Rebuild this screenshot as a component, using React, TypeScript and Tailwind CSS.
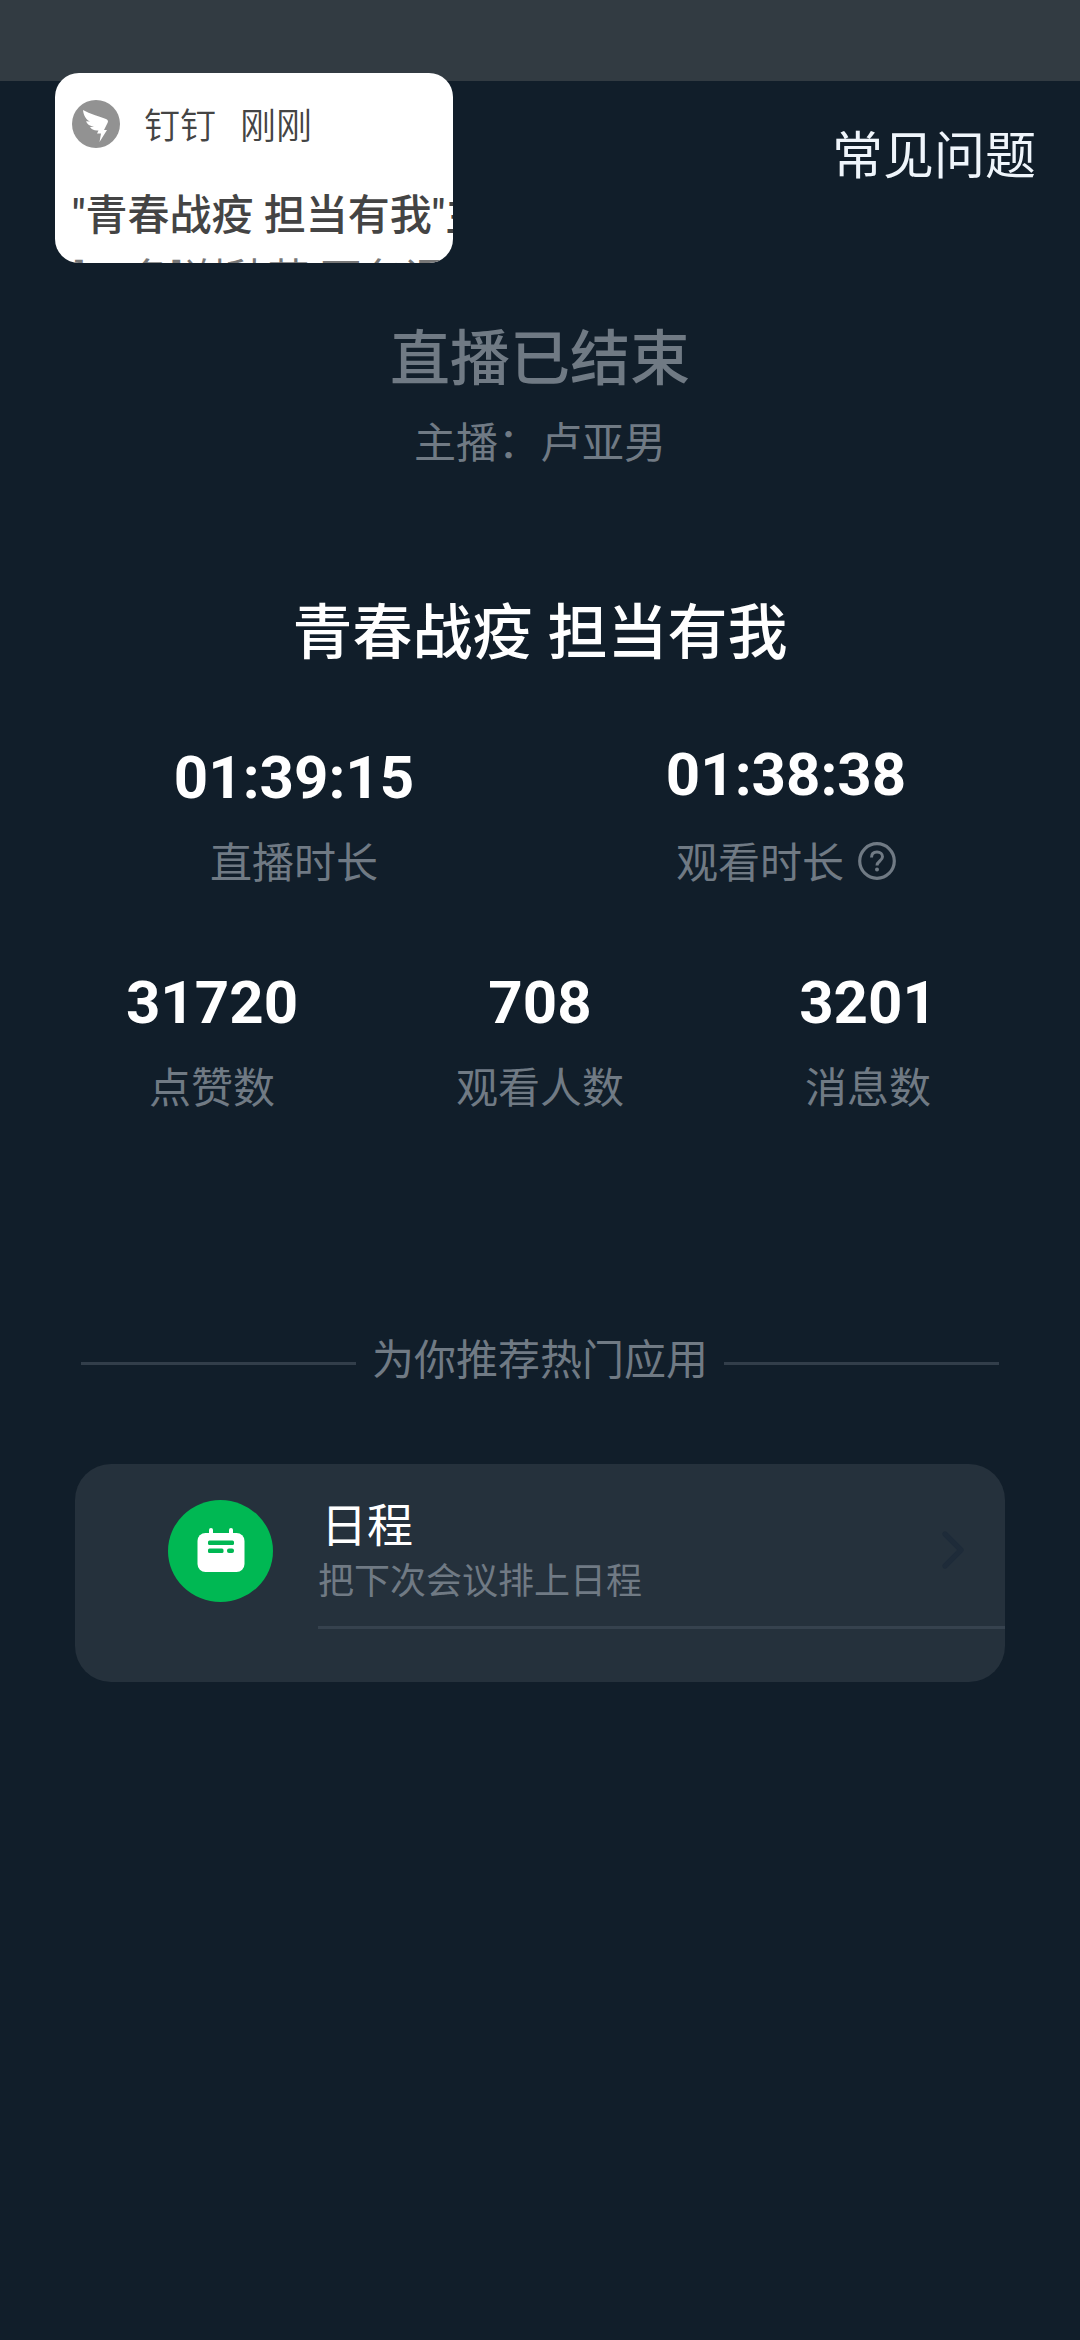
import { ChevronRight } from "lucide-react";

type StatProps = {
  value: string;
  label: string;
  className?: string;
};

const totals: StatProps[] = [
  { value: "31720", label: "点赞数", className: "w-[328px]" },
  { value: "708", label: "观看人数", className: "w-[328px]" },
  { value: "3201", label: "消息数", className: "w-[328px]" },
];

function WingIcon() {
  return (
    <svg viewBox="0 0 48 48" className="size-12 shrink-0">
      <circle cx="24" cy="24" r="24" fill="#929292" />
      <path
        d="M11 10c7 4 16 6 23 9 2 1 2.500 2 1.500 4l-3.500 7h3L27.500 42l1.500-8.500h-4l1.500-3c-4 .5-7-1-8.500-3.500l4-.2c-4-.5-7-2.500-8-5.500l4 .2c-4-2-6.500-6-7-11.500z"
        fill="#fff"
      />
    </svg>
  );
}

function CalendarIcon() {
  return (
    <svg viewBox="0 0 48 46" className="h-[46px] w-12">
      <rect x="12" y="0" width="4" height="9" rx="2" fill="#fff" />
      <rect x="32" y="0" width="4" height="9" rx="2" fill="#fff" />
      <rect x="0.500" y="5" width="47" height="39" rx="8" fill="#fff" />
      <rect x="11" y="12.500" width="26" height="4.500" rx="1.500" fill="#00b853" />
      <rect x="11" y="20.500" width="15.500" height="4.500" rx="1.500" fill="#00b853" />
      <rect x="30" y="20.500" width="7" height="4.500" rx="2" fill="#00b853" />
    </svg>
  );
}

function HelpIcon() {
  return (
    <svg viewBox="0 0 38 38" fill="none" stroke="#707a84" className="size-[38px]">
      <circle cx="19" cy="19" r="17.300" strokeWidth="3.200" />
      <path
        d="M13.500 15.500c0-3.500 2.200-5.500 5.500-5.500s5.500 2 5.500 4.800c0 4-5.500 4.400-5.500 8.700"
        strokeWidth="3"
      />
      <circle cx="19" cy="27.500" r="2" fill="#707a84" stroke="none" />
    </svg>
  );
}

function NotificationCard() {
  return (
    <div className="absolute left-[55px] top-[73px] h-[190px] w-[398px] overflow-hidden rounded-3xl bg-white pl-[17px] pt-[27px] text-[#444]">
      <div className="flex h-12 items-center text-[36px]">
        <WingIcon />
        <span className="ml-6 pt-[6px] font-[350]">钉钉</span>
        <span className="ml-[24px] pt-[6px] font-[350]">刚刚</span>
      </div>
      <div className="mt-[38px] whitespace-nowrap text-[42px] font-medium leading-[60px]">
        "青春战疫 担当有我"主播
      </div>
      <div className="mt-[4px] whitespace-nowrap text-[42px] leading-[60px] text-[#777]">
        [12条]谢秋芳:页务词
      </div>
    </div>
  );
}

function Stat({ value, label, className }: StatProps) {
  return (
    <div className={`flex flex-col items-center ${className ?? ""}`}>
      <span className="text-[60px] font-bold leading-[70px] text-white">
        {value}
      </span>
      <span className="mt-[21px] text-[42px] leading-[60px]">{label}</span>
    </div>
  );
}

export default function App() {
  return (
    <div className="relative h-[2340px] w-[1080px] overflow-hidden bg-[#111e2a] font-[Roboto,'Noto_Sans_CJK_SC',sans-serif] text-[#707a84]">
      <div className="h-[81px] bg-[#323b42]" />
      <NotificationCard />

      <header className="flex h-[148px] justify-end pr-11 pt-[39px]">
        <span className="text-[51px] leading-[74px] text-[#eff5fb]">
          常见问题
        </span>
      </header>

      <section className="flex flex-col items-center">
        <h1 className="mt-[88px] text-[60px] font-medium leading-[86px]">
          直播已结束
        </h1>
        <p className="mt-[11px] text-[42px] leading-[60px]">主播：卢亚男</p>
        <h2 className="mt-[117px] text-[60px] font-medium leading-[86px] text-white">
          青春战疫 担当有我
        </h2>
      </section>

      <section className="mt-[63px] flex px-[48px]">
        <div className="flex w-[492px] flex-col items-center pt-[3px]">
          <Stat value="01:39:15" label="直播时长" />
        </div>
        <div className="flex w-[492px] flex-col items-center">
          <span className="text-[60px] font-bold leading-[70px] text-white">
            01:38:38
          </span>
          <div className="mt-[24px] flex items-center gap-[14px] text-[42px] leading-[60px]">
            <span>观看时长</span>
            <div className="pb-[6px]">
              <HelpIcon />
            </div>
          </div>
        </div>
      </section>

      <section className="mt-[74px] flex px-[48px]">
        {totals.map((item) => (
          <Stat key={item.label} {...item} />
        ))}
      </section>

      <div className="mt-[212px] flex items-center px-[81px]">
        <div className="mt-[4px] h-[3px] flex-1 bg-[#323e4a]" />
        <span className="mx-4 text-[42px] leading-[60px]">为你推荐热门应用</span>
        <div className="mt-[4px] h-[3px] flex-1 bg-[#323e4a]" />
      </div>

      <section className="mx-[75px] mt-[73px] h-[218px] overflow-hidden rounded-[36px] bg-[#25313c]">
        <div className="flex">
          <div className="ml-[93px] mt-9 flex h-[102px] w-[105px] items-center justify-center rounded-[50%] bg-[#00b853]">
            <CalendarIcon />
          </div>
          <div className="ml-[45px] flex h-[165px] flex-1 border-b-[3px] border-[#36424e]">
            <div className="flex-1 pt-[29px]">
              <div className="ml-[3px] text-[46px] leading-[66px] text-white">
                日程
              </div>
              <div className="-mt-[3px] text-[36px] leading-[52px]">
                把下次会议排上日程
              </div>
            </div>
            <ChevronRight className="mr-[20px] mt-[54px] size-16 text-[#1e2b39]" />
          </div>
        </div>
      </section>
    </div>
  );
}
